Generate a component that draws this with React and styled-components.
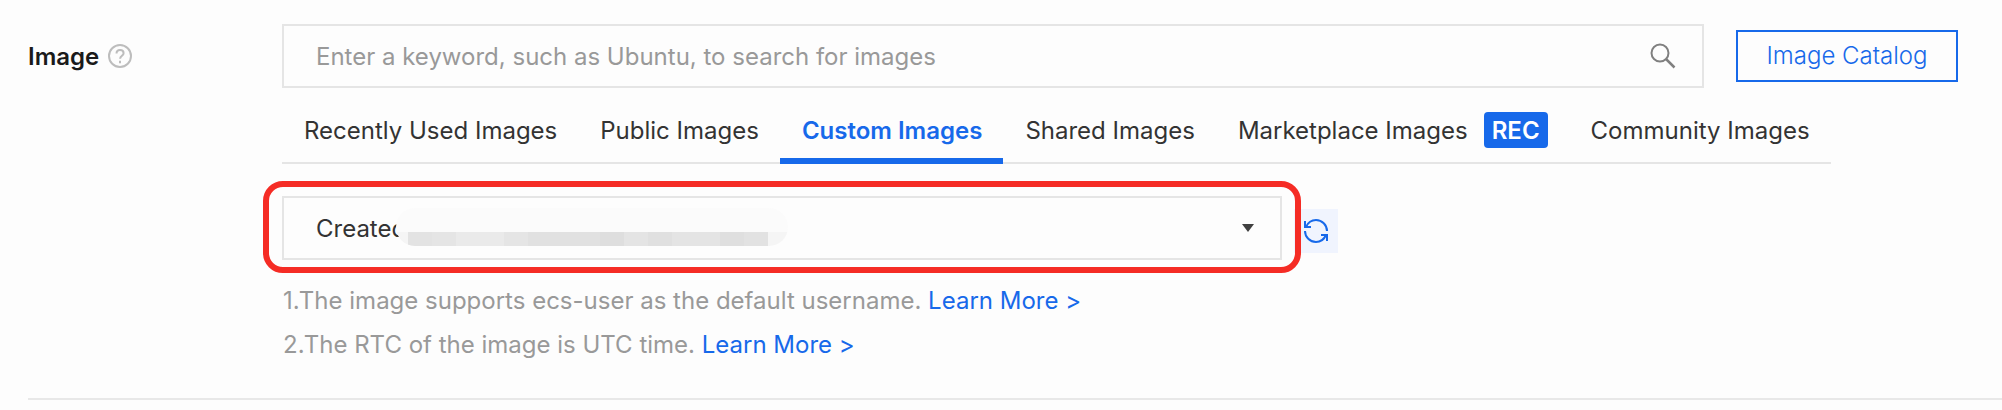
import React from 'react'
import styled, { createGlobalStyle } from 'styled-components'


const tabs = [
    { name: 'Recently Used Images' },
    { name: 'Public Images' },
    { name: 'Custom Images', active: true },
    { name: 'Shared Images' },
    { name: 'Marketplace Images', badge: 'REC' },
    { name: 'Community Images' },
]

const notes = [
    '1.The image supports ecs-user as the default username.',
    '2.The RTC of the image is UTC time.',
]

// one shade for each cell of the mask over the image name
const maskCells = [
    '#e3e3e3', '#e5e5e5', '#eaeaea', '#eaeaea', '#e5e5e5', '#e1e1e1', '#e1e1e1', '#e1e1e1',
    '#dedede', '#e4e4e4', '#e0e0e0', '#e4e4e4', '#e4e4e4', '#dfdfdf', '#e2e2e2',
]

function App() {
    return (
        <Section>
            <GlobalStyle />

            <LabelColumn>
                <Label htmlFor="image-search">Image</Label>
                <HelpButton type="button" aria-label="Help">
                    <svg width="24" height="24" viewBox="0 0 24 24" fill="none" stroke="#bdbdbd" strokeWidth="2">
                        <circle cx="12" cy="12" r="11" />
                        <path d="M8.5 9.5C8.5 7.300 10 6 12 6s3.600 1.300 3.600 3.200c0 2.500-3.500 2.700-3.500 5.600" />
                        <path d="M12 16.800v2.400" />
                    </svg>
                </HelpButton>
            </LabelColumn>

            <Content>

                <SearchRow>
                    <SearchBox>
                        <SearchInput
                            id="image-search"
                            type="text"
                            placeholder="Enter a keyword, such as Ubuntu, to search for images"
                        />
                        <SearchButton type="button" aria-label="Search">
                            <svg width="26" height="26" viewBox="0 0 26 26" fill="none" stroke="#808080" strokeWidth="2">
                                <circle cx="10" cy="10" r="8.500" />
                                <path d="M16 16l8.500 8.500" strokeWidth="2.500" />
                            </svg>
                        </SearchButton>
                    </SearchBox>
                    <CatalogButton type="button">Image Catalog</CatalogButton>
                </SearchRow>

                <Tabs role="tablist">
                    {tabs.map((tab) => (
                        <Tab key={tab.name} type="button" role="tab" aria-selected={!!tab.active} $active={tab.active}>
                            <TabName>{tab.name}</TabName>
                            {tab.badge && <Badge>{tab.badge}</Badge>}
                        </Tab>
                    ))}
                </Tabs>

                <SelectRow>
                    <SelectBox>
                        <Select aria-label="Custom image" defaultValue="created">
                            <option value="created">Created</option>
                        </Select>
                        <Arrow width="12" height="8" viewBox="0 0 12 8">
                            <path d="M0 0h12L6 8z" fill="#404040" />
                        </Arrow>
                        <Mask>
                            {maskCells.map((shade, i) => <MaskCell key={i} $shade={shade} />)}
                        </Mask>
                        <Highlight />
                    </SelectBox>
                    <RefreshButton type="button" aria-label="Refresh">
                        <svg width="24" height="24" viewBox="0 0 24 24" fill="none" stroke="#1769ea" strokeWidth="2">
                            <path d="M1 2v6h6" />
                            <path d="M2 8C4 3.500 7.500 1 12 1c6 0 11 5 11 11" />
                            <path d="M23 22v-6h-6" />
                            <path d="M22 16c-2 4.500-5.500 7-10 7-6 0-11-5-11-11" />
                        </svg>
                    </RefreshButton>
                </SelectRow>

                <Notes>
                    {notes.map((note) => (
                        <Note key={note}>
                            {note} <Link href="#">Learn More &gt;</Link>
                        </Note>
                    ))}
                </Notes>

            </Content>
        </Section>
    )
}

export default App


const GlobalStyle = createGlobalStyle`
    *{
        box-sizing:border-box;
    }

    body{
        margin:0;
        background-color:#fdfdfd;
    }

    body, button, input, select{
        font-family:Inter, "Liberation Sans", sans-serif;
        font-size:24px;
        line-height:32px;
        color:#333333;
    }

    button{
        padding:0;
        border:0;
        background:none;
        cursor:pointer;
    }

    svg{
        display:block;
    }
`

const Section = styled.section`
    display:flex;
    margin-left:28px;
    padding-top:24px;
    padding-bottom:31px;
    border-bottom:2px solid #e8e8e8;
`

const LabelColumn = styled.div`
    display:flex;
    align-items:center;
    gap:9px;
    flex:none;
    width:254px;
    height:64px;
`

const Label = styled.label`
    padding-top:2px;
    font-weight:600;
    color:#1a1a1a;
`

const HelpButton = styled.button`
    flex:none;
`

const Content = styled.div`
    flex:1;
    min-width:0;
`

const SearchRow = styled.div`
    display:flex;
    align-items:center;
    gap:32px;
    padding-right:44px;
`

const SearchBox = styled.div`
    display:flex;
    align-items:center;
    flex:1;
    height:64px;
    padding:0 26px 0 32px;
    border:2px solid #e5e5e5;
`

const SearchInput = styled.input`
    flex:1;
    min-width:0;
    padding:2px 0 0;
    border:0;
    outline:0;
    background:none;

    &::placeholder{
        color:#999999;
        opacity:1;
    }
`

const SearchButton = styled.button`
    flex:none;
`

const CatalogButton = styled.button`
    flex:none;
    min-width:222px;
    height:52px;
    padding:0 28px;
    border:2px solid #1769ea;
    font-weight:300;
    color:#1769ea;
`

const Tabs = styled.div`
    display:flex;
    width:fit-content;
    margin-top:8px;
    box-shadow:inset 0 -2px #e5e5e5;
`

const Tab = styled.button`
    display:flex;
    align-items:center;
    gap:16px;
    height:68px;
    padding:6px 21px 0 22px;
    border-bottom:6px solid ${(props) => (props.$active ? '#1769ea' : 'transparent')};
    font-weight:${(props) => (props.$active ? 600 : 400)};
    color:${(props) => (props.$active ? '#1769ea' : '#333333')};
    white-space:nowrap;
`

const TabName = styled.span`
    padding-top:2px;
`

const Badge = styled.span`
    height:36px;
    padding:3px 8px 0;
    border-radius:4px;
    background-color:#1769ea;
    font-weight:600;
    color:#ffffff;
`

const SelectRow = styled.div`
    display:flex;
    align-items:center;
    gap:12px;
    margin-top:32px;
`

const SelectBox = styled.div`
    position:relative;
    display:flex;
    align-items:center;
    flex:0 1 1000px;
    height:64px;
`

const Select = styled.select`
    width:100%;
    height:100%;
    padding:2px 32px 0;
    border:2px solid #e5e5e5;
    border-radius:0;
    background:none;
    appearance:none;
`

const Arrow = styled.svg`
    position:absolute;
    right:28px;
    pointer-events:none;
`

const Mask = styled.div`
    position:absolute;
    left:114px;
    top:12px;
    display:flex;
    align-items:flex-end;
    width:392px;
    height:38px;
    padding-left:12px;
    border-radius:19px;
    overflow:hidden;
    background:linear-gradient(#fbfbfb 24px, #f5f5f5 24px);
    pointer-events:none;
`

const MaskCell = styled.span`
    width:24px;
    height:14px;
    background-color:${(props) => props.$shade};
`

const Highlight = styled.div`
    position:absolute;
    z-index:1;
    top:-15px;
    right:-19px;
    bottom:-13px;
    left:-19px;
    border:6px solid #f52c25;
    border-radius:20px;
    pointer-events:none;
`

const RefreshButton = styled.button`
    display:flex;
    align-items:center;
    justify-content:center;
    flex:none;
    width:44px;
    height:44px;
    margin-top:6px;
    background-color:#f0f4fe;
`

const Notes = styled.div`
    margin-top:19px;
    padding-left:1px;
`

const Note = styled.p`
    margin:0;
    line-height:44px;
    color:#999999;
`

const Link = styled.a`
    color:#1769ea;
    text-decoration:none;
`
